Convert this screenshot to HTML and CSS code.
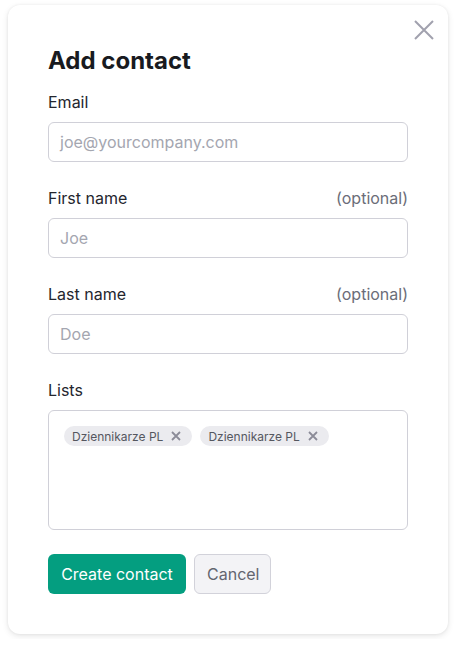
FILE: index.html
```html
<!DOCTYPE html>
<html lang="en">
<head>
<meta charset="utf-8">
<title>Add contact</title>
<link rel="stylesheet" href="styles.css">
</head>
<body>
<div class="modal">
  <button class="close" aria-label="Close">
    <svg width="20" height="20" viewBox="0 0 20 20"><path d="M1 1 L19 19 M19 1 L1 19" stroke="#a1a1ae" stroke-width="2" stroke-linecap="butt" fill="none"/></svg>
  </button>
  <h1 class="title">Add contact</h1>
  <div class="field">
    <div class="label-row"><label>Email</label></div>
    <div class="input"><span class="ph">joe@yourcompany.com</span></div>
  </div>
  <div class="field">
    <div class="label-row"><label>First name</label><span class="opt">(optional)</span></div>
    <div class="input"><span class="ph">Joe</span></div>
  </div>
  <div class="field">
    <div class="label-row"><label>Last name</label><span class="opt">(optional)</span></div>
    <div class="input"><span class="ph">Doe</span></div>
  </div>
  <div class="field">
    <div class="label-row"><label>Lists</label></div>
    <div class="lists">
      <span class="chip">Dziennikarze PL<svg class="chip-x" width="10" height="10" viewBox="0 0 10 10"><path d="M1 1 L9 9 M9 1 L1 9" stroke="#8b8b98" stroke-width="1.8" fill="none"/></svg></span>
      <span class="chip">Dziennikarze PL<svg class="chip-x" width="10" height="10" viewBox="0 0 10 10"><path d="M1 1 L9 9 M9 1 L1 9" stroke="#8b8b98" stroke-width="1.8" fill="none"/></svg></span>
    </div>
  </div>
  <div class="actions">
    <button class="btn primary">Create contact</button>
    <button class="btn secondary">Cancel</button>
  </div>
</div>
</body>
</html>
```
FILE: styles.css
```css
* { box-sizing: border-box; }
html, body { margin: 0; background: #ffffff; }
body {
  font-family: Inter, "Noto Sans", sans-serif;
  padding: 5px 8px;
}
.modal {
  position: relative;
  width: 440px;
  background: #fff;
  border-radius: 12px;
  box-shadow: 0 2px 6px rgba(0,0,0,0.10), 0 0 3px rgba(0,0,0,0.06);
  padding: 40px;
}
.close {
  position: absolute;
  top: 15px;
  right: 14px;
  width: 20px;
  height: 20px;
  padding: 0;
  border: 0;
  background: none;
  display: flex;
}
.title {
  margin: 2px 0 15px;
  font-size: 24px;
  line-height: 28px;
  font-weight: 700;
  color: #181a20;
  letter-spacing: 0;
}
.field { margin-bottom: 24px; }
.label-row {
  display: flex;
  justify-content: space-between;
  font-size: 16px;
  line-height: 24px;
  margin-bottom: 8px;
}
.label-row label { color: #24262e; }
.opt { color: #6b6d78; }
.input {
  height: 40px;
  border: 1px solid #d0d0d8;
  border-radius: 6px;
  padding: 0 11px;
  display: flex;
  align-items: center;
  font-size: 16px;
}
.ph { color: #a4a6b0; }
.lists {
  height: 120px;
  border: 1px solid #d0d0d8;
  border-radius: 6px;
  padding: 15px;
  display: flex;
  align-items: flex-start;
  gap: 8px;
}
.chip {
  display: inline-flex;
  align-items: center;
  height: 20px;
  padding: 0 11px 0 8px;
  border-radius: 10px;
  background: #ebebef;
  color: #55575f;
  font-size: 12px;
  gap: 8px;
  white-space: nowrap;
}
.actions { display: flex; gap: 8px; }
.btn {
  height: 40px;
  font-family: inherit;
  font-size: 16px;
  border-radius: 6px;
  padding: 0 12px;
}
.primary {
  background: #049e80;
  color: #fff;
  border: 0;
  width: 138px;
}
.secondary {
  background: #f3f3f6;
  color: #63656f;
  border: 1px solid #d2d2da;
  width: 77px;
}
```
